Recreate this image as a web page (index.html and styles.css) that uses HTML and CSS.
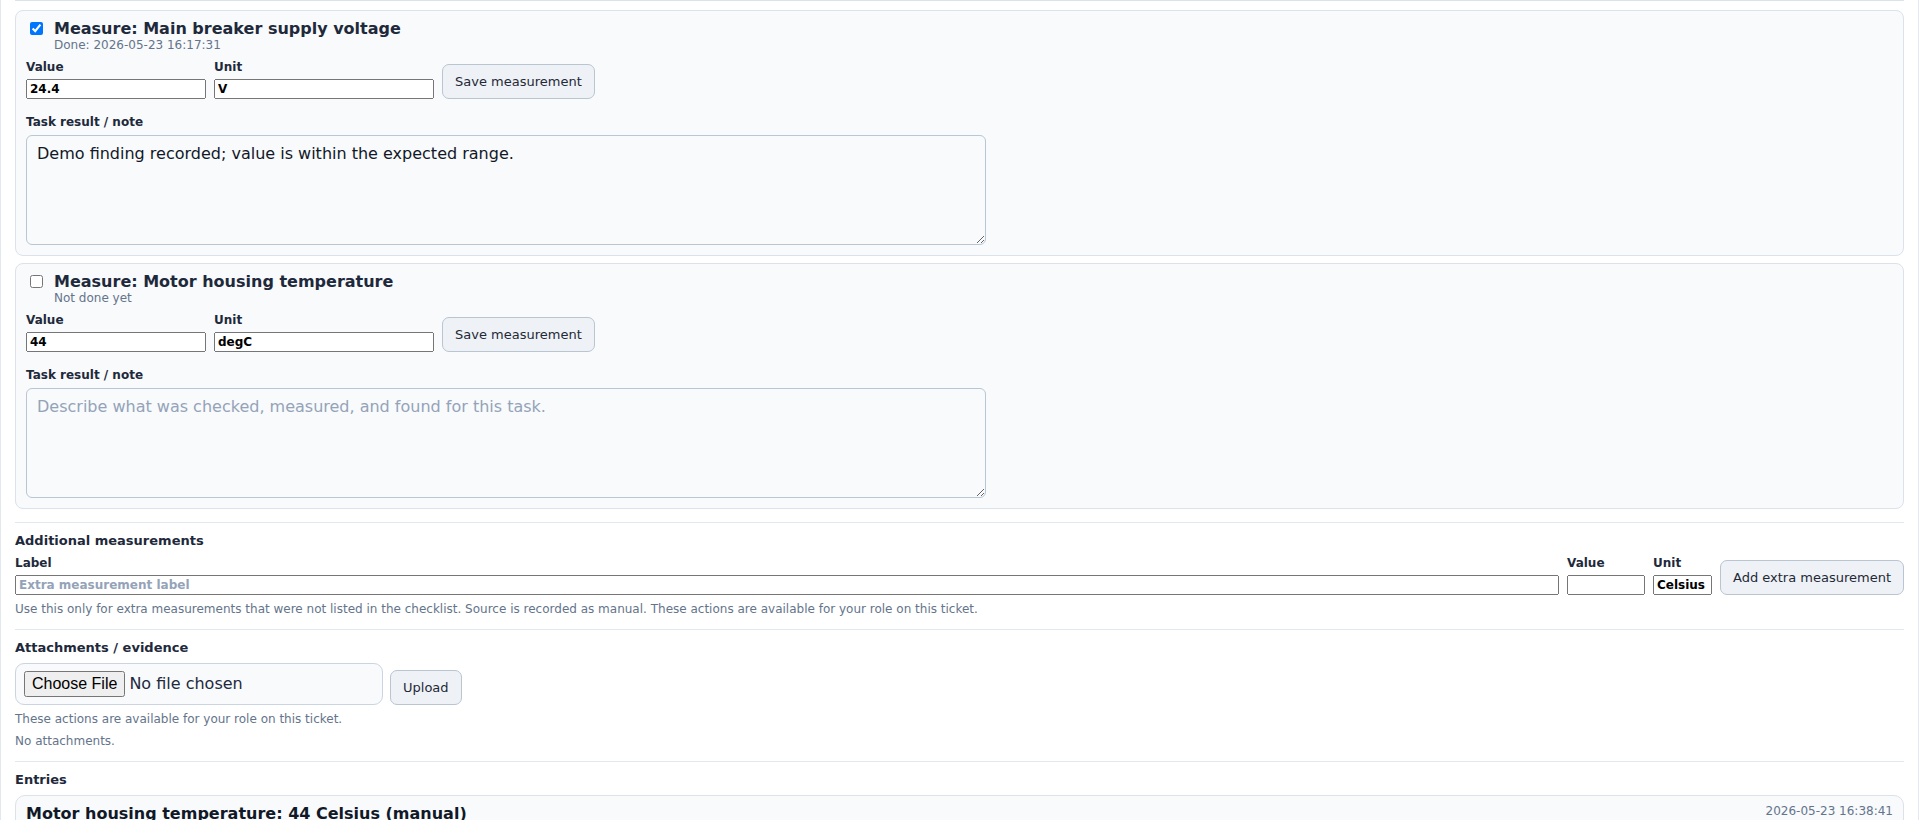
FILE: index.html
```html
<!doctype html>

<html>
  <head>
    <title>Ticket checklist</title>

    <!-- Page styles. -->
    <link rel="stylesheet" href="styles.css">
  </head>

  <body>
    <div class="panel">

      <!-- Tail of the previous checklist item. -->
      <div class="task task-stub"></div>

      <div class="task">
        <div class="task-head">
          <input type="checkbox" checked>
          <div>
            <div class="task-title">Measure: Main breaker supply voltage</div>
            <div class="task-sub">Done: 2026-05-23 16:17:31</div>
          </div>
        </div>
        <div class="task-fields">
          <label class="field">Value<input class="input-value" type="text" value="24.4"></label>
          <label class="field">Unit<input class="input-unit" type="text" value="V"></label>
          <button class="btn">Save measurement</button>
        </div>
        <label class="field note">Task result / note<textarea placeholder="Describe what was checked, measured, and found for this task.">Demo finding recorded; value is within the expected range.</textarea></label>
      </div>

      <div class="task">
        <div class="task-head">
          <input type="checkbox">
          <div>
            <div class="task-title">Measure: Motor housing temperature</div>
            <div class="task-sub">Not done yet</div>
          </div>
        </div>
        <div class="task-fields">
          <label class="field">Value<input class="input-value" type="text" value="44"></label>
          <label class="field">Unit<input class="input-unit" type="text" value="degC"></label>
          <button class="btn">Save measurement</button>
        </div>
        <label class="field note">Task result / note<textarea placeholder="Describe what was checked, measured, and found for this task."></textarea></label>
      </div>

      <div class="block">
        <h3>Additional measurements</h3>
        <div class="extra-row">
          <label class="field field-grow">Label<input type="text" placeholder="Extra measurement label"></label>
          <label class="field">Value<input class="input-extra-value" type="text"></label>
          <label class="field">Unit<input class="input-extra-unit" type="text" value="Celsius"></label>
          <button class="btn">Add extra measurement</button>
        </div>
        <p class="hint">Use this only for extra measurements that were not listed in the checklist. Source is recorded as manual. These actions are available for your role on this ticket.</p>
      </div>

      <div class="block">
        <h3>Attachments / evidence</h3>
        <div class="upload-row">
          <div class="file-box"><input type="file"></div>
          <button class="btn">Upload</button>
        </div>
        <p class="hint">These actions are available for your role on this ticket.</p>
        <p class="hint">No attachments.</p>
      </div>

      <div class="block">
        <h3>Entries</h3>
        <div class="entry">
          <div class="entry-head">
            <div class="entry-title">Motor housing temperature: 44 Celsius (manual)</div>
            <div class="entry-time">2026-05-23 16:38:41</div>
          </div>
        </div>
      </div>

    </div>
  </body>
</html>
```

FILE: styles.css
```css
* { box-sizing: border-box; }
html, body {
  margin: 0;
  padding: 0;
  background: #fff;
  font-family: "DejaVu Sans", sans-serif;
  color: #1e293b;
}
.panel {
  margin-right: 1px;
  padding: 0 14px;
  border-left: 1px solid #e2e8f0;
  border-right: 1px solid #e2e8f0;
  min-height: 820px;
}

/* Checklist items */
.task {
  background: #f8fafc;
  border: 1px solid #dbe2ea;
  border-radius: 8px;
  padding: 8px 10px 10px;
  margin-bottom: 7px;
}
.task-stub {
  height: 0;
  padding: 0;
  border-top: 0;
  border-radius: 0 0 8px 8px;
  margin-bottom: 9px;
}
.task-head {
  display: flex;
  align-items: flex-start;
  gap: 8px;
}
.task-head input { margin: 3px 3px 3px 4px; }
.task-title {
  font-size: 16px;
  line-height: 19px;
  font-weight: bold;
  color: #1e293b;
}
.task-sub {
  font-size: 12px;
  line-height: 14px;
  color: #64748b;
}
.task-fields {
  display: flex;
  gap: 8px;
  margin-top: 8px;
}

/* Labelled fields */
.field {
  display: flex;
  flex-direction: column;
  gap: 5px;
  font-size: 12px;
  line-height: 14px;
  font-weight: bold;
  color: #1e293b;
}
.field input {
  font: inherit;
  margin: 0;
}
.field input::placeholder { color: #94a3b8; }
.input-value { width: 180px; }
.input-unit { width: 220px; }
.note {
  margin-top: 16px;
  gap: 6px;
}
.note textarea {
  display: block;
  width: 960px;
  height: 110px;
  margin: 0;
  padding: 8px 10px;
  font: 400 16px "DejaVu Sans", sans-serif;
  color: #111827;
  background: #f8fafc;
  border: 1px solid #b9c6d3;
  border-radius: 6px;
}
.note textarea::placeholder { color: #94a3b8; }

.btn {
  align-self: flex-end;
  margin: 0;
  padding: 9px 12px;
  font: 13px/15px "DejaVu Sans", sans-serif;
  color: #1f2937;
  background: #eef2f6;
  border: 1px solid #b9c5d1;
  border-radius: 7px;
}

/* Lower sections */
.block {
  margin-top: 13px;
  padding-top: 10px;
  border-top: 1px solid #e2e8f0;
}
.block h3 {
  margin: 0 0 8px;
  font-size: 13px;
  line-height: 15px;
  color: #1e293b;
}
.extra-row {
  display: flex;
  gap: 8px;
}
.field-grow { flex: 1; }
.input-extra-value { width: 78px; }
.input-extra-unit { width: 59px; }
.hint {
  margin: 7px 0 0;
  font-size: 12px;
  line-height: 14px;
  color: #64748b;
}
.hint + .hint { margin-top: 8px; }

.upload-row {
  display: flex;
  align-items: flex-end;
  gap: 7px;
}
.file-box {
  width: 368px;
  padding: 7px 8px;
  background: #f8fafc;
  border: 1px solid #cbd5e1;
  border-radius: 9px;
}
.file-box input {
  width: 100%;
  font: 16px "DejaVu Sans", sans-serif;
}
.file-box input::file-selector-button { padding: 2px 6px; }

.entry {
  background: #f8fafc;
  border: 1px solid #dbe2ea;
  border-radius: 10px;
  padding: 8px 10px 12px;
}
.entry-head {
  display: flex;
  justify-content: space-between;
  align-items: flex-start;
}
.entry-title {
  font-size: 16px;
  line-height: 19px;
  font-weight: bold;
  color: #111827;
}
.entry-time {
  font-size: 12px;
  line-height: 14px;
  color: #64748b;
}
```
